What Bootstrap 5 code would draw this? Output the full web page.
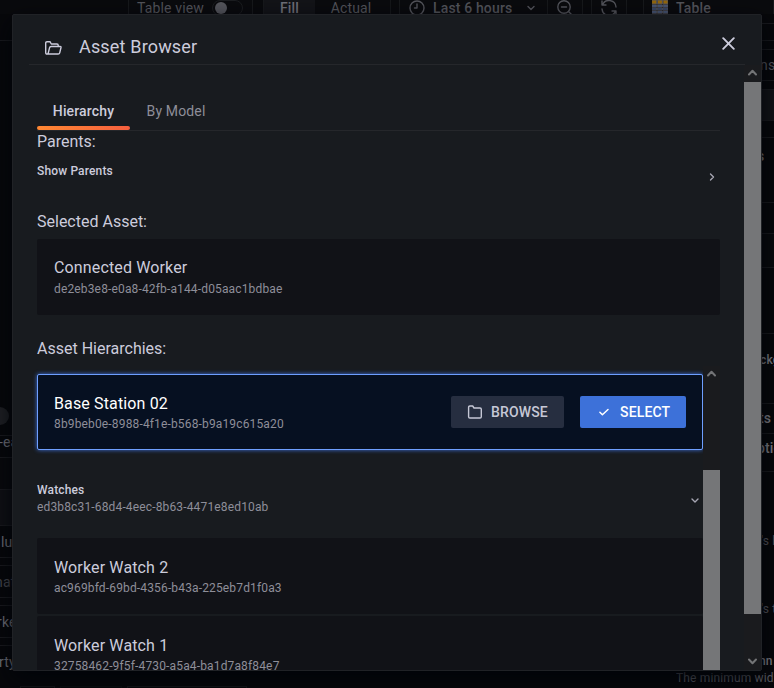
<!DOCTYPE html>
<html lang="en" data-bs-theme="dark">
<head>
<meta charset="utf-8">
<meta name="viewport" content="width=device-width, initial-scale=1">
<title>Asset Browser</title>
<link href="https://cdn.jsdelivr.net/npm/bootstrap@5.3.0/dist/css/bootstrap.min.css" rel="stylesheet">
<style>
html,body{height:688px;overflow:hidden}
body{font:400 14px/22px Roboto,sans-serif;letter-spacing:.15px;background:#07080b;color:#ccccdc}
svg{display:block;fill:none;stroke:currentColor;stroke-linecap:round;stroke-linejoin:round;flex:none}
.page{height:688px;color:#54555c}
.toolbar{height:14px;background:#090a0d}
.tool{height:14px;border:solid #17191c;border-width:0 1px;display:flex;align-items:center;line-height:16px;flex:none;background:#0a0b0e;padding-top:2px}
.tool-on{background:#131418;color:#70717a}
.pill{width:31px;height:16px;border:1px solid #1b1d20;border-radius:8px;padding:1px 2px}
.pill i{display:block;width:12px;height:12px;border-radius:50%;background:#56575e}
.rail{width:12px;overflow:hidden;color:#74757e}
.rail>div,.opts>div{border-bottom:1px solid #1a1b1f;white-space:nowrap;flex:none;display:flex;align-items:center}
.opts{width:12px;overflow:hidden}
.opts .bright{color:#85868f;font-weight:500}
.opts .dim{color:#5a5b63}
.bottom{height:17px;padding-left:20px}
.chip{height:2px;border:1px solid #15171a;border-bottom:0;margin-right:5px}
.knob{width:18px;height:18px;border-radius:50%;background:#1f2024;margin-left:-9px;flex:none}
.browser{left:12px;top:14px;width:750px;height:657px;background:#181b1f;border:1px solid #202226;border-radius:2px;box-shadow:0 8px 24px #010409}
.head{margin:0 16px;height:50px;border-bottom:1px solid #25272b;padding-left:16px}
.head-title{font-size:18px;line-height:22px;letter-spacing:.17px;margin-left:17px;padding-top:14px}
.pane{width:731px;padding:24px 24px 0;overflow:hidden}
.tabs{height:42px;border-bottom:1px solid #25272b}
.tab-item{width:93px;text-align:center;color:#8e8e99;position:relative;padding-top:11px}
.tab-item + .tab-item{width:92px}
.tab-item.on{color:#ccccdc;font-weight:500}
.tab-item.on::after{content:"";position:absolute;left:0;right:0;bottom:0;height:4px;border-radius:2px;background:linear-gradient(90deg,#ff8833,#f55f3e)}
.label-lg{font-size:16px;line-height:22px;letter-spacing:0}
.strong-sm{font-size:12px;font-weight:500;line-height:18px}
.uid{font-size:12px;line-height:18px;color:#8e8e99}
.asset{height:76px;background:#111217;border-radius:2px;padding:19px 17px 0}
.asset-name{font-size:16px;line-height:22px;letter-spacing:.14px}
.asset.hot{background:#061021;border:1px solid #6e9fff;padding:18px 16px 0;box-shadow:0 0 4px #3d71d9}
.hot .asset-name{color:#fff}
.act{height:32px;border-radius:2px;font-weight:500;font-size:14px;line-height:32px;letter-spacing:.15px;display:flex;align-items:center;padding:0 16px}
.act-browse{background:#262e40;color:#c6c8d6;width:113px;gap:8px}
.act-select{background:#3d71d9;color:#fff;width:106px;gap:8px}
.track{width:17px;background:#1a1b1e;color:#737476}
.thumb{background:#757678}
.cap{height:17px;display:flex;align-items:center;justify-content:center;flex:none}
.list{width:670px;margin-left:-4px;padding:8px 0 0 4px}
</style>
<script src="https://cdn.jsdelivr.net/npm/bootstrap@5.3.0/dist/js/bootstrap.bundle.min.js"></script>
</head>
<body>
<div class="page d-flex flex-column overflow-hidden">
  <div class="toolbar d-flex overflow-hidden">
    <div class="flex-shrink-0" style="width:128px"></div>
    <div class="tool" style="width:125px;padding-left:8px"><span style="width:75px">Table view</span><span class="pill"><i></i></span></div>
    <div class="tool" style="width:127px;margin-left:10px;border-right:0"><span class="tool-on tool border-0 justify-content-center fw-medium" style="width:51px;margin-top:-2px">Fill</span><span class="flex-fill text-center" style="padding-right:3px">Actual</span></div>
    <div class="flex-shrink-0" style="width:1px;background:#15171a"></div>
    <div class="tool" style="width:149px;margin-left:8px;padding-left:9px;font-weight:500"><svg width="16" height="16" viewBox="0 0 16 16" stroke-width="1.4"><circle cx="8" cy="8" r="7"/><path d="M8 4v4H5.5"/></svg><span class="ms-2">Last 6 hours</span><svg style="margin-left:15px" width="8" height="8" viewBox="0 0 8 8" stroke-width="1.4"><path d="M1 2.5l3 3 3-3"/></svg></div>
    <div class="tool border-start-0 justify-content-center" style="width:35px"><svg width="16" height="16" viewBox="0 0 16 16" stroke-width="1.4"><circle cx="7" cy="7" r="6.2"/><path d="M4.5 7h5M11.5 11.5L15 15"/></svg></div>
    <div class="tool justify-content-center" style="width:36px;margin-left:8px"><svg width="16" height="16" viewBox="0 0 16 16" stroke-width="1.4"><path d="M1 1v4h4M1.5 5A7 7 0 0 1 15 7M15 15v-4h-4M14.500 11A7 7 0 0 1 1 9"/></svg></div>
    <div class="tool fw-medium" style="width:131px;margin-left:16px;padding-left:8px"><svg width="16" height="16" viewBox="0 0 16 16" stroke="none"><path fill="#96690c" d="M0 0h4.8v4H0zM5.6 0h4.8v4H5.6zM11.2 0H16v4h-4.8z"/><path fill="#3c5a92" d="M0 5h4.8v2H0zM5.6 5h4.8v2H5.6zM11.2 5H16v2h-4.8zM0 11h4.8v2H0zM5.6 11h4.8v2H5.6zM11.2 11H16v2h-4.8z"/><path fill="#203f73" d="M0 8h4.8v2H0zM5.6 8h4.8v2H5.6zM11.2 8H16v2h-4.8zM0 14h4.8v2H0zM5.6 14h4.8v2H5.6zM11.2 14H16v2h-4.8z"/></svg><span class="ms-2">Table</span></div>
  </div>
  <div class="d-flex justify-content-between flex-fill" style="min-height:0">
    <div class="rail d-flex flex-column">
      <div style="height:27px"></div>
      <div style="height:395px;align-items:flex-end"><span class="knob" style="margin-bottom:10px"></span></div>
      <div style="height:22px;padding-bottom:9px"><span style="margin-left:-1px">-ea</span></div>
      <div style="height:32px;background:#090a0d"></div>
      <div style="height:36px;background:#101115"></div>
      <div style="height:32px;padding-top:2px"><span style="margin-left:1px">lu</span></div>
      <div style="height:8px"></div>
      <div style="height:32px;padding-top:2px;color:#4a4b53"><span style="margin-left:-5px">nat</span></div>
      <div style="height:8px"></div>
      <div style="height:32px;padding-top:2px"><span style="margin-left:-3px">rke</span></div>
      <div style="height:8px"></div>
      <div style="height:32px;padding-top:2px"><span style="margin-left:-1px">rty</span></div>
    </div>
    <div class="opts d-flex flex-column">
      <div style="height:10px"></div>
      <div style="height:17px"></div>
      <div style="height:9px"></div>
      <div class="dim" style="height:31px"><span style="margin-left:-2px">ns</span></div>
      <div style="height:9px"></div>
      <div style="height:31px;background:#131418"></div>
      <div style="height:17px"></div>
      <div class="bright" style="height:65px;padding-bottom:28px"><span style="margin-left:-5px">s</span></div>
      <div style="height:31px"></div>
      <div style="height:34px;background:#090a0d"></div>
      <div style="height:66px"></div>
      <div class="bright" style="height:70px;padding-bottom:16px;font-size:12px"><span style="margin-left:-2px">ckg</span></div>
      <div class="bright" style="height:30px"><span style="margin-left:-3px">ts</span></div>
      <div class="bright" style="height:38px;padding-bottom:8px"><span style="margin-left:-5px">ptio</span></div>
      <div class="border-0 dim" style="height:103px;padding-top:36px;font-size:12px"><span style="margin-left:-1px">'s l</span></div>
      <div class="border-0 dim" style="height:68px;font-size:12px"><span style="margin-left:-1px">'s t</span></div>
      <div class="bright border-0" style="height:28px;padding-top:8px;font-size:12px"><span style="margin-left:-3px">nn</span></div>
    </div>
  </div>
  <div class="bottom d-flex justify-content-between align-items-end">
    <div class="d-flex"><div class="chip" style="width:35px"></div><div class="chip" style="width:62px;border-color:#0b0f12"></div><div class="chip" style="width:120px"></div></div>
    <div style="width:98px;font-size:12px;line-height:18px;color:#62636b;overflow:hidden;white-space:nowrap;margin-bottom:1px">The minimum wid</div>
  </div>
</div>

<div class="browser position-absolute d-flex flex-column overflow-hidden">
  <div class="head d-flex align-items-center flex-shrink-0">
    <svg style="margin-top:17px" width="17" height="14" viewBox="0 0 17 14" stroke-width="1.4"><path d="M3 13H2Q.7 13 .7 11.7V2Q.7.7 2 .7h3L6.300 3H12q1.200 0 1.200 1.200V5.500M3 13l1.600-6.300Q4.900 5.500 6 5.500h9.200q1 0 .8 1l-1.300 5.300Q14.400 13 13.200 13z"/></svg>
    <span class="head-title">Asset Browser</span>
    <svg class="ms-auto" style="margin-right:10px;margin-top:7px" width="13" height="13" viewBox="0 0 13 13" stroke-width="1.9"><path d="M1.200 1.200l10.600 10.600M11.800 1.200L1.200 11.800"/></svg>
  </div>
  <div class="d-flex flex-fill" style="min-height:0">
    <div class="pane">
      <div class="tabs d-flex" style="width:683px"><div class="tab-item on">Hierarchy</div><div class="tab-item">By Model</div></div>
      <div class="label-lg">Parents:</div>
      <div class="d-flex justify-content-between" style="height:58px;padding-top:9px"><span class="strong-sm">Show Parents</span><svg style="margin:11px 4px 0;color:#a6a6b3" width="8" height="8" viewBox="0 0 8 8" stroke-width="1.4"><path d="M2.500 1l3 3-3 3"/></svg></div>
      <div class="label-lg" style="margin-bottom:6px">Selected Asset:</div>
      <div class="asset" style="padding-top:18px"><div class="asset-name" style="height:23px">Connected Worker</div><div class="uid">de2eb3e8-e0a8-42fb-a144-d05aac1bdbae</div></div>
      <div class="label-lg" style="margin-top:23px;height:28px">Asset Hierarchies:</div>
      <div class="d-flex" style="height:304px">
        <div class="list overflow-hidden">
          <div class="asset hot d-flex justify-content-between">
            <div><div class="asset-name">Base Station 02</div><div class="uid">8b9beb0e-8988-4f1e-b568-b9a19c615a20</div></div>
            <div class="d-flex gap-3" style="padding-top:3px">
              <div class="act act-browse"><svg width="16" height="14" viewBox="0 0 16 14" stroke-width="1.400"><path d="M2.900 1H5.700L7 3h6q1.300 0 1.300 1.300v7.400Q14.300 13 13 13H2.900Q1.600 13 1.600 11.700V2.300Q1.600 1 2.900 1z"/></svg>BROWSE</div>
              <div class="act act-select"><svg width="16" height="16" viewBox="0 0 16 16" stroke-width="1.500"><path d="M3.900 8.300l2.500 2.500L12 5.500"/></svg>SELECT</div>
            </div>
          </div>
          <div class="d-flex justify-content-between" style="height:88px;padding-top:32px"><div><div class="strong-sm" style="line-height:16px">Watches</div><div class="uid">ed3b8c31-68d4-4eec-8b63-4471e8ed10ab</div></div><svg style="margin:15px 4px 0;color:#a6a6b3" width="8" height="7" viewBox="0 0 8 7" stroke-width="1.400"><path d="M1 2l3 3 3-3"/></svg></div>
          <div class="asset"><div class="asset-name">Worker Watch 2</div><div class="uid">ac969bfd-69bd-4356-b43a-225eb7d1f0a3</div></div>
          <div class="asset" style="margin-top:2px"><div class="asset-name">Worker Watch 1</div><div class="uid">32758462-9f5f-4730-a5a4-ba1d7a8f84e7</div></div>
        </div>
        <div class="track d-flex flex-column flex-shrink-0"><div class="cap" style="padding-bottom:2px"><svg width="9" height="7" viewBox="0 0 9 7" stroke-width="2"><path d="M1 5.500l3.500-3.700L8 5.500"/></svg></div><div style="height:87px"></div><div class="thumb flex-fill"></div></div>
      </div>
    </div>
    <div class="track d-flex flex-column flex-shrink-0">
      <div class="cap" style="padding-bottom:2px"><svg width="9" height="7" viewBox="0 0 9 7" stroke-width="2"><path d="M1 5.500l3.500-3.700L8 5.500"/></svg></div>
      <div class="thumb" style="height:532px"></div>
      <div class="cap mt-auto"><svg width="9" height="7" viewBox="0 0 9 7" stroke-width="2"><path d="M1 1.500l3.500 3.700L8 1.500"/></svg></div>
    </div>
  </div>
</div>
</body>
</html>
